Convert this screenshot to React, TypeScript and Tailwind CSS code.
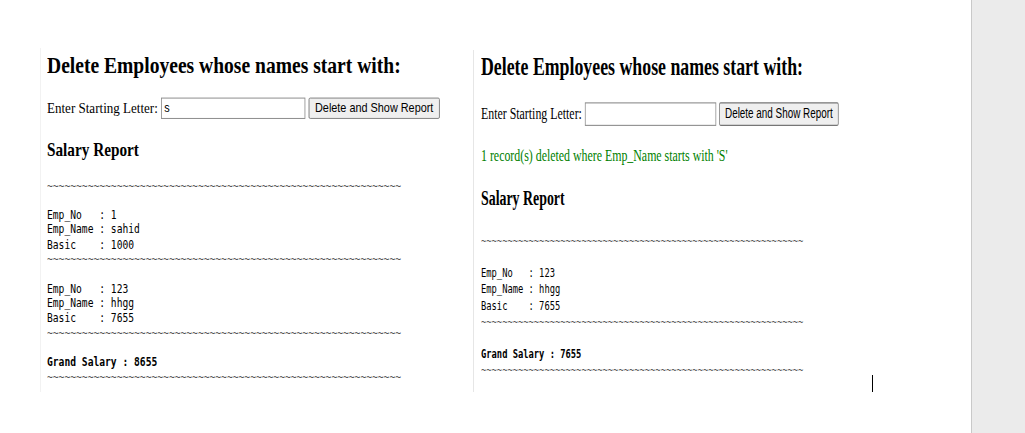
import React from "react";

const TILDES = "~".repeat(61);

type Rec = { no: string; name: string; basic: string };

function Tilde() {
  return <div className="text-[#555]">{TILDES}</div>;
}

function Report({ records, total }: { records: Rec[]; total: string }) {
  return (
    <div
      className="whitespace-pre text-[11.83px] leading-[15.15px] text-black"
      style={{ fontFamily: '"DejaVu Sans Mono", "Liberation Mono", monospace' }}
    >
      <Tilde />
      <div>{" "}</div>
      {records.map((r, i) => (
        <React.Fragment key={i}>
          <div>{`Emp_No   : ${r.no}`}</div>
          <div>{`Emp_Name : ${r.name}`}</div>
          <div>{`Basic    : ${r.basic}`}</div>
          <Tilde />
          <div>{" "}</div>
        </React.Fragment>
      ))}
      <div className="font-bold">{`Grand Salary : ${total}`}</div>
      <Tilde />
    </div>
  );
}

function FormRow({ value }: { value: string }) {
  return (
    <div className="flex h-[26px] items-center gap-[4px]">
      <span className="text-[16px] leading-[18px]">Enter Starting Letter:</span>
      <div
        className="flex h-[22px] w-[177px] items-center border border-[#8a8a8a] bg-white px-[3px] text-[13.33px]"
        style={{ fontFamily: '"Liberation Sans", Arial, sans-serif' }}
      >
        {value}
      </div>
      <button
        className="flex h-[22px] w-[161px] items-center justify-center rounded-[2px] border border-[#767676] bg-[#efefef] text-[13.33px] text-black"
        style={{ fontFamily: '"Liberation Sans", Arial, sans-serif' }}
      >
        Delete and Show Report
      </button>
    </div>
  );
}

export default function App() {
  const serif = { fontFamily: '"Liberation Serif", "Times New Roman", serif' };
  return (
    <div className="flex h-[433px] w-[1025px] overflow-hidden bg-white text-black" style={serif}>
      <div className="relative flex w-[971px] items-start bg-white">
        {/* Left panel */}
        <div className="ml-[40px] mt-[48px] h-[344px] w-[433px] border-l border-[#f2f2f2] pl-[6px] pt-[4px]">
          <div className="w-[520px] origin-top-left scale-x-[0.815] scale-y-[0.97]">
            <h2 className="mb-[17px] text-[24px] font-bold leading-[28px]">
              Delete Employees whose names start with:
            </h2>
            <FormRow value="s" />
            <h3 className="mb-[19px] mt-[19px] text-[18.72px] font-bold leading-[22px]">Salary Report</h3>
            <Report
              records={[
                { no: "1", name: "sahid", basic: "1000" },
                { no: "123", name: "hhgg", basic: "7655" },
              ]}
              total="8655"
            />
          </div>
        </div>

        {/* Right panel */}
        <div className="mt-[50px] h-[342px] w-[400px] border-l border-[#e6e6e6] pl-[7px] pt-[1px]">
          <div className="w-[540px] origin-top-left scale-x-[0.742] scale-y-[1.07]">
            <h2 className="mb-[18px] text-[24px] font-bold leading-[28px]">
              Delete Employees whose names start with:
            </h2>
            <FormRow value="" />
            <p className="mt-[17px] text-[16px] leading-[18px] text-[#008000]">
              1 record(s) deleted where Emp_Name starts with 'S'
            </p>
            <h3 className="mb-[21px] mt-[20px] text-[18.72px] font-bold leading-[22px]">Salary Report</h3>
            <Report records={[{ no: "123", name: "hhgg", basic: "7655" }]} total="7655" />
          </div>
        </div>

        {/* text cursor */}
        <div className="absolute left-[872px] top-[375px] h-[17px] w-px bg-black" />
      </div>
      <div className="h-full flex-1 border-l border-[#c9c9c9] bg-[#ebebeb]" />
    </div>
  );
}
